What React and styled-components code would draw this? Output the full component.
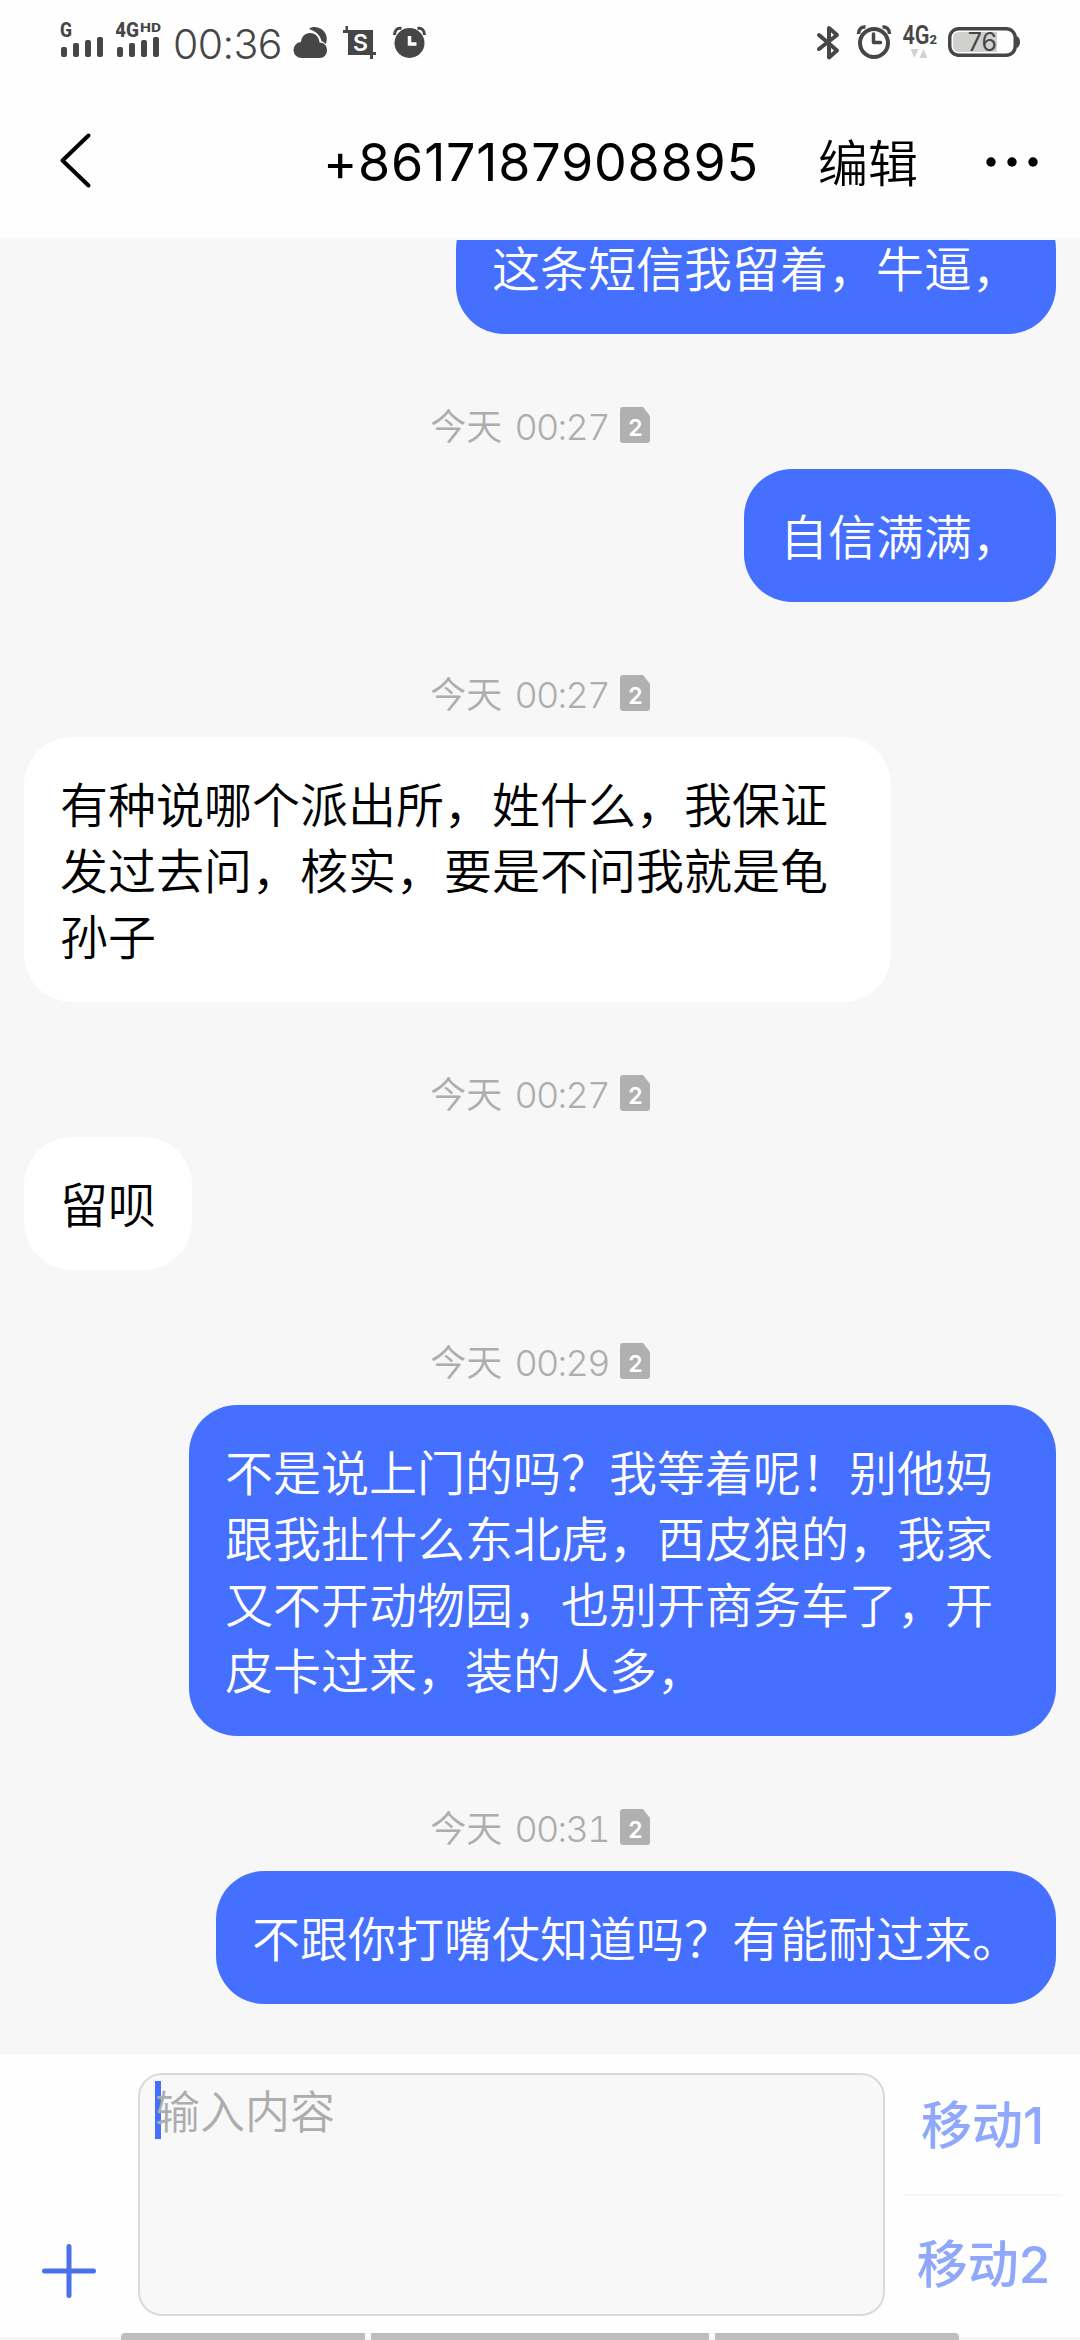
import React from 'react';
import styled, { createGlobalStyle } from 'styled-components';

const GlobalStyle = createGlobalStyle`
  * {
    box-sizing: border-box;
  }
  body {
    margin: 0;
    background: #fff;
    font-family: Inter, 'Noto Sans CJK SC', sans-serif;
  }
  svg {
    display: block;
    flex: none;
  }
`;

const Screen = styled.div`
  display: flex;
  flex-direction: column;
  width: 1080px;
  height: 2340px;
  overflow: hidden;
  background: #fefefe;
`;

const StatusBar = styled.div`
  display: flex;
  justify-content: space-between;
  height: 86px;
  padding: 0 59px 0 60px;
  color: #464646;
`;

const StatusGroup = styled.div`
  display: flex;
  align-items: center;
  height: 86px;
`;

const Signal = styled.svg`
  width: ${(props) => props.$width}px;
  height: 86px;
  fill: currentColor;
  font-family: Roboto, sans-serif;
  font-weight: 800;
`;

const Clock = styled.div`
  width: 120px;
  padding-top: 2px;
  font-size: 41px;
  font-weight: 350;
  line-height: 48px;
  letter-spacing: -0.6px;
`;

const StatusIcon = styled.svg`
  width: ${(props) => props.$width}px;
  height: 86px;
  fill: currentColor;
`;

const TopBar = styled.header`
  display: flex;
  align-items: center;
  height: 152px;
  padding: 0 38px 4px 58px;
  color: #000;
`;

const Title = styled.h1`
  flex: 1;
  margin: 0;
  padding: 6px 59px 0 0;
  font-size: 52px;
  font-weight: 400;
  line-height: 64px;
  text-align: right;
  letter-spacing: 0.8px;
`;

const EditButton = styled.button`
  all: unset;
  padding-top: 7px;
  margin-right: 66px;
  font-size: 50px;
  font-weight: 350;
  line-height: 64px;
`;

const Messages = styled.main`
  display: flex;
  flex-direction: column;
  justify-content: flex-end;
  height: 1816px;
  padding-bottom: 50px;
  overflow: hidden;
  border-top: 2px solid #fafafa;
  background: #f7f7f7;
`;

const TimeRow = styled.div`
  display: flex;
  flex: none;
  justify-content: center;
  align-items: center;
  gap: 11px;
  height: 135px;
  padding: 73px 0 26px;
  color: #adadad;
  font-size: 36px;
  font-weight: 350;
  line-height: 36px;
`;

const TimeText = styled.span`
  padding-top: 4px;
`;

const TimeDigits = styled.span`
  margin-left: 2px;
  font-variant-numeric: tabular-nums;
  letter-spacing: -1.7px;
`;

const SimIcon = styled.svg`
  width: 30px;
  height: 36px;
`;

const Bubble = styled.div`
  flex: none;
  align-self: ${(props) => (props.$mine ? 'flex-end' : 'flex-start')};
  max-width: 867px;
  margin: 0 24px;
  padding: 36px 36px 31px;
  border-radius: 48px;
  background: ${(props) => (props.$mine ? '#456fff' : '#fff')};
  color: ${(props) => (props.$mine ? '#fff' : '#000')};
  font-size: 48px;
  font-weight: 350;
  line-height: 66px;
`;

const Composer = styled.footer`
  display: flex;
  height: 279px;
  padding-top: 19px;
`;

const AddButton = styled.button`
  all: unset;
  display: flex;
  flex: none;
  align-items: flex-end;
  width: 96px;
  height: 225px;
  padding-left: 42px;
`;

const Field = styled.div`
  display: flex;
  flex: none;
  align-items: flex-start;
  width: 747px;
  height: 243px;
  padding: 6px 15px;
  border: 2px solid #dadada;
  border-radius: 24px;
  background: #f8f8f8;
`;

const Caret = styled.span`
  width: 6px;
  height: 58px;
  background: #456fff;
`;

const Placeholder = styled.span`
  margin-left: -6px;
  padding-top: 2px;
  color: #adadad;
  font-size: 45px;
  font-weight: 350;
  line-height: 60px;
`;

const SendColumn = styled.div`
  width: 159px;
  margin-left: 18px;
`;

const SendButton = styled.button`
  all: unset;
  box-sizing: border-box;
  display: block;
  width: 100%;
  height: 121px;
  padding-bottom: 16px;
  color: #8fa8fb;
  font-size: 51px;
  font-weight: 500;
  line-height: 64px;
  text-align: center;
  & + & {
    height: 142px;
    padding: 0 0 2px 2px;
    border-top: 2px solid #f6f6f6;
  }
`;

const NavHints = styled.div`
  display: flex;
  gap: 6px;
  height: 7px;
  padding: 0 121px;
  background: linear-gradient(#fefefe 4px, #f6f6f6 4px);
`;

const NavHint = styled.span`
  width: ${(props) => props.$width}px;
  background: #bebebe;
  &:first-child {
    border-top-left-radius: 4px;
  }
  &:last-child {
    border-top-right-radius: 4px;
  }
`;

const bars = [
  { x: 1, top: 47 },
  { x: 13, top: 43 },
  { x: 25, top: 40 },
  { x: 37, top: 37 },
];

const SignalBars = () =>
  bars.map((bar) => (
    <rect key={bar.x} x={bar.x} y={bar.top} width="6" height={57 - bar.top} rx="2" />
  ));

const messages = [
  { text: '这条短信我留着，牛逼，', mine: true },
  { time: '00:27', text: '自信满满，', mine: true },
  { time: '00:27', text: '有种说哪个派出所，姓什么，我保证发过去问，核实，要是不问我就是龟孙子' },
  { time: '00:27', text: '留呗' },
  {
    time: '00:29',
    text: '不是说上门的吗？我等着呢！别他妈跟我扯什么东北虎，西皮狼的，我家又不开动物园，也别开商务车了，开皮卡过来，装的人多，',
    mine: true,
  },
  { time: '00:31', text: '不跟你打嘴仗知道吗？有能耐过来。', mine: true },
];

const TimeLabel = ({ time }) => (
  <TimeRow>
    <TimeText>
      今天 <TimeDigits>{time}</TimeDigits>
    </TimeText>
    <SimIcon viewBox="0 0 30 36">
      <path d="M3 0h20l7 9v24a3 3 0 0 1-3 3H3a3 3 0 0 1-3-3V3a3 3 0 0 1 3-3z" fill="#b0b0b0" />
      <text x="15.5" y="29" fill="#fff" fontSize="23" fontWeight="600" textAnchor="middle">
        2
      </text>
    </SimIcon>
  </TimeRow>
);

const App = () => {
  return (
    <Screen>
      <GlobalStyle />
      <StatusBar>
        <StatusGroup>
          <Signal $width={56} viewBox="0 0 56 86">
            <text x="0" y="36.5" fontSize="20" textLength="12" lengthAdjust="spacingAndGlyphs">
              G
            </text>
            <SignalBars />
          </Signal>
          <Signal $width={57} viewBox="0 0 57 86">
            <text x="-1" y="36.5" fontSize="20" textLength="24" lengthAdjust="spacingAndGlyphs">
              4G
            </text>
            <text x="24" y="32" fontSize="13.5" textLength="21" lengthAdjust="spacingAndGlyphs">
              HD
            </text>
            <SignalBars />
          </Signal>
          <Clock>00:36</Clock>
          <StatusIcon $width={49} viewBox="293 0 49 86">
            <path d="M309 29c3-3 9-2.500 13 .5c5 4 6 10 3.500 15c-1-1.500-2-2.500-4-3.500c-1-5-5-9.500-12.500-12z" />
            <path
              d="M302 58a8 8 0 0 1-1-16c.5-5.500 4-9 9-9c5.500 0 9 4 9.500 9.500c4.500 0 7.500 3.500 7.500 7.500c0 4.500-3 8-7.500 8z"
              stroke="#fefefe"
              strokeWidth="2"
              paintOrder="stroke"
            />
          </StatusIcon>
          <StatusIcon $width={50} viewBox="342 0 50 86">
            <path d="M348 30h25v22h3v3h-3v4h-3v-4h-22V33h-5v-3h2.500v-4h2.500z" />
            <text x="360.500" y="50.500" fill="#fff" fontSize="23" fontWeight="600" textAnchor="middle">
              S
            </text>
          </StatusIcon>
          <StatusIcon $width={36} viewBox="392 0 36 86">
            <circle cx="409.500" cy="43" r="15" />
            <path
              d="M394.500 35c0-5 3-7.500 7-6.500M424.500 35c0-5-3-7.500-7-6.500"
              fill="none"
              stroke="currentColor"
              strokeWidth="3"
            />
            <path d="M409.500 36v8h7" fill="none" stroke="#fff" strokeWidth="3.500" />
          </StatusIcon>
        </StatusGroup>
        <StatusGroup>
          <StatusIcon $width={40} viewBox="815 0 40 86">
            <path
              d="M819 35l18 15.500l-8 7V28l8 7L819 49"
              fill="none"
              stroke="currentColor"
              strokeWidth="4"
              strokeLinecap="round"
              strokeLinejoin="round"
            />
          </StatusIcon>
          <StatusIcon $width={46} viewBox="855 0 46 86">
            <g fill="none" stroke="currentColor">
              <circle cx="874" cy="43" r="14" strokeWidth="4" />
              <path d="M858.500 34c0-5 3-7.500 7-7M889.500 34c0-5-3-7.500-7-7" strokeWidth="3.500" />
              <path d="M873.500 34v8.500h7" strokeWidth="3.500" strokeLinecap="round" strokeLinejoin="round" />
            </g>
          </StatusIcon>
          <Signal $width={46} viewBox="901 0 46 86">
            <text x="902.500" y="44" fontSize="25" fontWeight="600" textLength="27" lengthAdjust="spacingAndGlyphs">
              4G
            </text>
            <text x="929.500" y="44" fontSize="13">
              2
            </text>
            <path d="M910.500 49h8l-4 9zM919.500 58h8l-4-9z" fill="#d2d2d2" />
          </Signal>
          <StatusIcon $width={74} viewBox="947 0 74 86">
            <rect x="949.750" y="28.750" width="65.500" height="26.500" rx="9" fill="none" stroke="currentColor" strokeWidth="3.500" />
            <path d="M997 32v20h-38q-6 0-6-6v-8q0-6 6-6z" fill="#d0d0d0" />
            <path d="M1017 36q3 2 3 6t-3 6z" />
            <text x="982.500" y="51" fontSize="25" textAnchor="middle">
              76
            </text>
          </StatusIcon>
        </StatusGroup>
      </StatusBar>
      <TopBar>
        <svg width="36" height="60" viewBox="58 130 36 60">
          <path
            d="M88.500 135.500L62.500 160.500L88.500 185.500"
            fill="none"
            stroke="#000"
            strokeWidth="4"
            strokeLinecap="round"
            strokeLinejoin="round"
          />
        </svg>
        <Title>+8617187908895</Title>
        <EditButton>编辑</EditButton>
        <svg width="58" height="16" viewBox="0 0 58 16">
          <circle cx="7" cy="10" r="4.700" />
          <circle cx="28" cy="10" r="4.700" />
          <circle cx="49" cy="10" r="4.700" />
        </svg>
      </TopBar>
      <Messages>
        {messages.map((message) => (
          <React.Fragment key={message.text}>
            {message.time && <TimeLabel time={message.time} />}
            <Bubble $mine={message.mine}>{message.text}</Bubble>
          </React.Fragment>
        ))}
      </Messages>
      <Composer>
        <AddButton>
          <svg width="54" height="54" viewBox="0 0 54 54">
            <path d="M27 2.500v49M2.500 27h49" stroke="#4a70ea" strokeWidth="5" strokeLinecap="round" />
          </svg>
        </AddButton>
        <Field>
          <Caret />
          <Placeholder>输入内容</Placeholder>
        </Field>
        <SendColumn>
          <SendButton>移动1</SendButton>
          <SendButton>移动2</SendButton>
        </SendColumn>
      </Composer>
      <NavHints>
        <NavHint $width={244} />
        <NavHint $width={338} />
        <NavHint $width={244} />
      </NavHints>
    </Screen>
  );
};

export default App;
